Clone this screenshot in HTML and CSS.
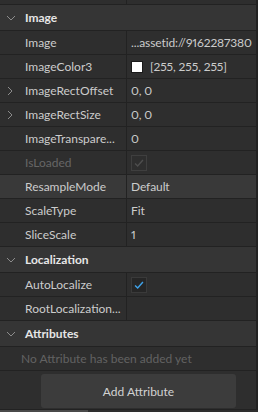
FILE: index.html
```
<!DOCTYPE html>
<html lang="en">
  <head>
    <meta charset="UTF-8" />
    <meta name="viewport" content="width=device-width, initial-scale=1.0" />
    <title>Properties</title>
    <link rel="stylesheet" href="styles.css">
  </head>
  <body>
    <div class="panel">
      <div class="row stub"><div class="name"></div><div class="value"></div></div>

      <div class="group"><svg class="chev" viewBox="0 0 10 10"><path d="M1 3l4 4 4-4" /></svg>Image</div>
      <div class="row"><div class="name">Image</div><div class="value">...assetid://9162287380</div></div>
      <div class="row">
        <div class="name">ImageColor3</div>
        <div class="value"><span class="swatch"></span>[255, 255, 255]</div>
      </div>
      <div class="row"><div class="name"><svg class="chev side" viewBox="0 0 10 10"><path d="M3 1l4 4-4 4" /></svg>ImageRectOffset</div><div class="value">0, 0</div></div>
      <div class="row"><div class="name"><svg class="chev side" viewBox="0 0 10 10"><path d="M3 1l4 4-4 4" /></svg>ImageRectSize</div><div class="value">0, 0</div></div>
      <div class="row"><div class="name">ImageTranspare...</div><div class="value">0</div></div>
      <div class="row dim">
        <div class="name">IsLoaded</div>
        <div class="value"><span class="check off"><svg viewBox="0 0 16 16"><path d="M3.5 8.5l3 3 6-7" /></svg></span></div>
      </div>
      <div class="row hover"><div class="name">ResampleMode</div><div class="value">Default</div></div>
      <div class="row"><div class="name">ScaleType</div><div class="value">Fit</div></div>
      <div class="row"><div class="name">SliceScale</div><div class="value">1</div></div>

      <div class="group"><svg class="chev" viewBox="0 0 10 10"><path d="M1 3l4 4 4-4" /></svg>Localization</div>
      <div class="row">
        <div class="name">AutoLocalize</div>
        <div class="value"><span class="check on"><svg viewBox="0 0 16 16"><path d="M3.5 8.5l3 3 6-7" /></svg></span></div>
      </div>
      <div class="row"><div class="name">RootLocalization...</div><div class="value"></div></div>

      <div class="group"><svg class="chev" viewBox="0 0 10 10"><path d="M1 3l4 4 4-4" /></svg>Attributes</div>
      <div class="empty">No Attribute has been added yet</div>
      <div class="actions"><button class="add">Add Attribute</button></div>
    </div>
    <div class="hscroll"><div class="thumb"></div></div>
  </body>
</html>
```

FILE: styles.css
```
html, body {
  margin: 0;
  background: #2e2e2e;
}
body {
  width: 258px;
  height: 412px;
  overflow: hidden;
  font-family: Lato, "Open Sans", sans-serif;
  font-size: 12px;
  color: #cccccc;
}
.panel {
  border-right: 2px solid #222222;
  height: 409px;
  overflow: hidden;
}
.row {
  display: grid;
  grid-template-columns: 127px 1fr;
  height: 23px;
  border-bottom: 1px solid #222222;
}
.row.stub {
  height: 4px;
}
.name {
  position: relative;
  border-right: 1px solid #222222;
  padding-left: 25px;
  white-space: nowrap;
  line-height: 23px;
}
.value {
  padding-left: 4px;
  display: flex;
  align-items: center;
  white-space: nowrap;
  font-variant-numeric: proportional-nums;
  letter-spacing: -0.1px;
}
.row.hover {
  background: #393939;
}
.row.dim .name {
  color: #666666;
}
.group {
  display: flex;
  align-items: center;
  height: 25px;
  padding-left: 25px;
  position: relative;
  background: #353535;
  border-bottom: 1px solid #222222;
  font-weight: bold;
  color: #e6e6e6;
}
.chev {
  position: absolute;
  left: 6px;
  top: 50%;
  width: 10px;
  height: 10px;
  margin-top: -5px;
  fill: none;
  stroke: #8c8c8c;
  stroke-width: 1;
}
.chev.side {
  left: 5px;
}
.swatch {
  width: 10px;
  height: 10px;
  background: #ffffff;
  border: 1px solid #1a1a1a;
  margin-right: 7px;
}
.check {
  width: 14px;
  height: 14px;
  border: 1px solid #3a3a3a;
  background: #262626;
  display: flex;
}
.check svg {
  width: 14px;
  height: 14px;
  fill: none;
  stroke-width: 1.6;
}
.check.off {
  border-color: #3f3f3f;
  background: #2e2e2e;
}
.check.off svg {
  stroke: #4e4e4e;
}
.check.on svg {
  stroke: #3ea2ea;
}
.empty {
  height: 23px;
  line-height: 23px;
  padding-left: 21px;
  color: #626262;
  border-bottom: 1px solid #222222;
}
.actions {
  padding: 3px 20px 0 41px;
}
.add {
  width: 195px;
  height: 34px;
  border: 0;
  border-radius: 3px;
  background: #3c3c3c;
  color: #d2d2d2;
  font-family: inherit;
  font-size: 12px;
}
.hscroll {
  height: 3px;
  border-top: 1px solid #222222;
}
.thumb {
  width: 88px;
  height: 3px;
  background: #4a4a4a;
}
```
